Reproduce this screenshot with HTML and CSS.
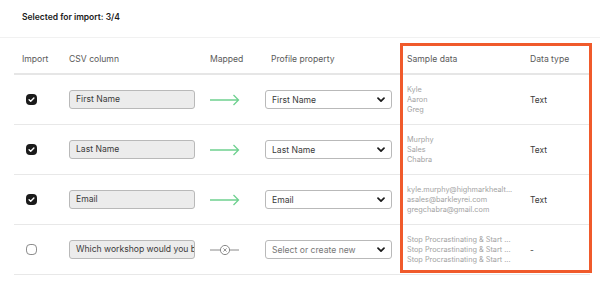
FILE: index.html
```html
<!DOCTYPE html>
<html>
<head>
<meta charset="utf-8">
<link rel="stylesheet" href="styles.css">
</head>
<body>
<div class="top">Selected for import: 3/4</div>
<div class="table-wrap">
  <div class="grid">
    <div class="hcell c1">Import</div>
    <div class="hcell c2">CSV column</div>
    <div class="hcell c3">Mapped</div>
    <div class="hcell c4">Profile property</div>
    <div class="hcell c5">Sample data</div>
    <div class="hcell c6">Data type</div>

    <div class="cell c1"><svg class="cb" width="11" height="11" viewBox="0 0 11 11"><rect x="0" y="0" width="11" height="11" rx="4" fill="#1b1b1b"/><path d="M3.1 5.7 L4.7 7.2 L7.9 4" fill="none" stroke="#fff" stroke-width="1.4" stroke-linecap="round" stroke-linejoin="round"/></svg></div>
    <div class="cell c2"><div class="field">First Name</div></div>
    <div class="cell c3"><svg width="30" height="12" viewBox="0 0 30 12"><path d="M0 6 H28.5 M23.5 1 L28.5 6 L23.5 11" fill="none" stroke="#6fd190" stroke-width="1.3"/></svg></div>
    <div class="cell c4"><div class="select"><span>First Name</span><svg width="8" height="6" viewBox="0 0 8 6"><path d="M1 1.2 L4 4.2 L7 1.2" fill="none" stroke="#1b1b1b" stroke-width="1.7" stroke-linecap="round" stroke-linejoin="round"/></svg></div></div>
    <div class="cell c5 sample"><div>Kyle</div><div>Aaron</div><div>Greg</div></div>
    <div class="cell c6 type">Text</div>

    <div class="cell c1"><svg class="cb" width="11" height="11" viewBox="0 0 11 11"><rect x="0" y="0" width="11" height="11" rx="4" fill="#1b1b1b"/><path d="M3.1 5.7 L4.7 7.2 L7.9 4" fill="none" stroke="#fff" stroke-width="1.4" stroke-linecap="round" stroke-linejoin="round"/></svg></div>
    <div class="cell c2"><div class="field">Last Name</div></div>
    <div class="cell c3"><svg width="30" height="12" viewBox="0 0 30 12"><path d="M0 6 H28.5 M23.5 1 L28.5 6 L23.5 11" fill="none" stroke="#6fd190" stroke-width="1.3"/></svg></div>
    <div class="cell c4"><div class="select"><span>Last Name</span><svg width="8" height="6" viewBox="0 0 8 6"><path d="M1 1.2 L4 4.2 L7 1.2" fill="none" stroke="#1b1b1b" stroke-width="1.7" stroke-linecap="round" stroke-linejoin="round"/></svg></div></div>
    <div class="cell c5 sample"><div>Murphy</div><div>Sales</div><div>Chabra</div></div>
    <div class="cell c6 type">Text</div>

    <div class="cell c1"><svg class="cb" width="11" height="11" viewBox="0 0 11 11"><rect x="0" y="0" width="11" height="11" rx="4" fill="#1b1b1b"/><path d="M3.1 5.7 L4.7 7.2 L7.9 4" fill="none" stroke="#fff" stroke-width="1.4" stroke-linecap="round" stroke-linejoin="round"/></svg></div>
    <div class="cell c2"><div class="field">Email</div></div>
    <div class="cell c3"><svg width="30" height="12" viewBox="0 0 30 12"><path d="M0 6 H28.5 M23.5 1 L28.5 6 L23.5 11" fill="none" stroke="#6fd190" stroke-width="1.3"/></svg></div>
    <div class="cell c4"><div class="select"><span>Email</span><svg width="8" height="6" viewBox="0 0 8 6"><path d="M1 1.2 L4 4.2 L7 1.2" fill="none" stroke="#1b1b1b" stroke-width="1.7" stroke-linecap="round" stroke-linejoin="round"/></svg></div></div>
    <div class="cell c5 sample"><div>kyle.murphy@highmarkhealt...</div><div>asales@barkleyrei.com</div><div>gregchabra@gmail.com</div></div>
    <div class="cell c6 type">Text</div>

    <div class="cell c1"><svg class="cb" width="11" height="11" viewBox="0 0 11 11"><rect x="0.5" y="0.5" width="10" height="10" rx="3.6" fill="#fff" stroke="#8a8a8a" stroke-width="1"/></svg></div>
    <div class="cell c2"><div class="field">Which workshop would you b</div></div>
    <div class="cell c3"><svg width="30" height="12" viewBox="0 0 30 12"><path d="M0 6 H10 M20 6 H29" fill="none" stroke="#8a8a8a" stroke-width="1"/><circle cx="15" cy="6" r="4.6" fill="none" stroke="#8a8a8a" stroke-width="1"/><path d="M13.4 4.4 L16.6 7.6 M16.6 4.4 L13.4 7.6" stroke="#8a8a8a" stroke-width="0.9"/></svg></div>
    <div class="cell c4"><div class="select"><span class="ph">Select or create new</span><svg width="8" height="6" viewBox="0 0 8 6"><path d="M1 1.2 L4 4.2 L7 1.2" fill="none" stroke="#1b1b1b" stroke-width="1.7" stroke-linecap="round" stroke-linejoin="round"/></svg></div></div>
    <div class="cell c5 sample"><div>Stop Procrastinating &amp; Start ...</div><div>Stop Procrastinating &amp; Start ...</div><div>Stop Procrastinating &amp; Start ...</div></div>
    <div class="cell c6 type">-</div>
  </div>
  <div class="highlight"></div>
</div>
</body>
</html>
```

FILE: styles.css
```css
html, body {
  margin: 0;
  padding: 0;
  background: #fff;
  font-family: Inter, "Noto Sans", "Liberation Sans", sans-serif;
  color: #222;
}
.top {
  height: 25px;
  padding-top: 12px;
  padding-left: 22px;
  font-size: 8.5px;
  line-height: 11px;
  font-weight: 600;
  color: #1a1a1a;
  border-bottom: 1px solid #f1f1f1;
  box-sizing: content-box;
}
.table-wrap {
  position: relative;
  margin-left: 14px;
  width: 576px;
}
.grid {
  display: grid;
  grid-template-columns: 51px 140px 55px 140px 123px 67px;
}
.hcell {
  height: 12px;
  padding-top: 15px;
  padding-bottom: 8px;
  line-height: 12px;
  font-size: 8.6px;
  color: #5a5a5a;
  border-bottom: 2px solid #e6e6e6;
}
.cell {
  height: 49px;
  border-bottom: 1px solid #e8e8e8;
  display: flex;
  align-items: center;
}
.hcell.c1 { padding-left: 8px; }
.hcell.c2 { padding-left: 4px; }
.hcell.c3 { padding-left: 5px; }
.hcell.c4 { padding-left: 11px; }
.hcell.c5 { padding-left: 7px; }
.hcell.c6 { padding-left: 7px; }
.cell.c1 { padding-left: 12px; }
.cell.c2 { padding-left: 4px; }
.cell.c3 { padding-left: 5px; }
.cell.c4 { padding-left: 5px; }
.cell.c5 { padding-left: 7px; }
.cell.c6 { padding-left: 7px; }
.cb { display: block; }
.field {
  box-sizing: border-box;
  width: 126px;
  height: 19px;
  background: #ececec;
  border: 1px solid #b9b9b9;
  border-radius: 3px;
  padding-left: 6px;
  font-size: 8.6px;
  line-height: 17px;
  color: #3a3a3a;
  white-space: nowrap;
  overflow: hidden;
}
.select {
  box-sizing: border-box;
  width: 127px;
  height: 19px;
  background: #fff;
  border: 1px solid #b9b9b9;
  border-radius: 3px;
  padding-left: 6px;
  padding-right: 6px;
  display: flex;
  align-items: center;
  justify-content: space-between;
  font-size: 8.6px;
  color: #3a3a3a;
}
.select .ph { color: #777; }
.sample {
  flex-direction: column;
  align-items: flex-start;
  justify-content: center;
  font-size: 7.3px;
  line-height: 10px;
  color: #a3a3a3;
  white-space: nowrap;
}
.type {
  font-size: 8.4px;
  color: #3a3a3a;
}
.highlight {
  position: absolute;
  left: 386px;
  top: 5px;
  width: 192px;
  height: 230px;
  box-sizing: border-box;
  border: 3px solid #f05a2b;
  pointer-events: none;
}
```
